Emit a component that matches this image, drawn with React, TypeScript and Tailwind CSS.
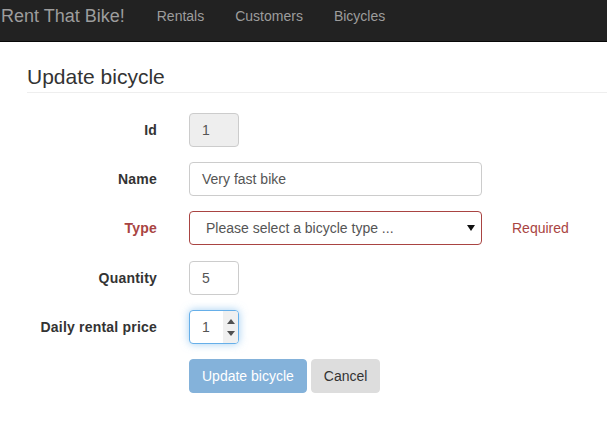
import React from "react";

const font = { fontFamily: '"Liberation Sans", Arial, Helvetica, sans-serif' };

function Row({
  label,
  error,
  children,
  className = "",
}: {
  label?: string;
  error?: boolean;
  children: React.ReactNode;
  className?: string;
}) {
  return (
    <div className={`flex items-center ${className}`}>
      <label
        className={`w-[130px] shrink-0 text-right text-[14px] font-bold leading-5 tracking-[0.2px] ${
          error ? "text-[#a94442]" : "text-[#333]"
        }`}
      >
        {label}
      </label>
      <div className="ml-[32px] flex items-center">{children}</div>
    </div>
  );
}

export default function App() {
  return (
    <div className="min-h-screen bg-white text-[14px] text-[#333]" style={font}>
      {/* Navbar */}
      <nav className="flex h-[42px] items-start border-b border-[#080808] bg-[#222] pt-[6px]">
        <a className="pl-[1px] pr-[17px] text-[18px] leading-5 text-[#9d9d9d]">Rent That Bike!</a>
        <a className="pl-[15px] pr-[16px] text-[14px] leading-5 text-[#9d9d9d]">Rentals</a>
        <a className="pl-[15px] pr-[16px] text-[14px] leading-5 text-[#9d9d9d]">Customers</a>
        <a className="pl-[15px] pr-[16px] text-[14px] leading-5 text-[#9d9d9d]">Bicycles</a>
      </nav>

      <div className="pl-[27px]">
        <div className="mt-[23px] border-b border-[#eee] pb-[4px]">
          <h3 className="text-[21px] font-normal leading-[1.1] text-[#333]">Update bicycle</h3>
        </div>

        <form className="mt-[20px] flex flex-col gap-[15px]">
          <Row label="Id">
            <div className="flex h-[34px] w-[50px] items-center rounded border border-[#ccc] bg-[#eee] px-3 text-[#555]">
              1
            </div>
          </Row>

          <Row label="Name">
            <div className="flex h-[34px] w-[293px] items-center rounded border border-[#ccc] bg-white px-3 text-[#555]">
              Very fast bike
            </div>
          </Row>

          <Row label="Type" error className="mb-[1px]">
            <div className="flex h-[34px] w-[293px] items-center justify-between rounded border border-[#a94442] bg-white pl-4 pr-[5px] text-[#555]">
              <span>Please select a bicycle type ...</span>
              <svg width="8" height="6" viewBox="0 0 8 6" className="mr-[1px]">
                <path d="M0 0 L8 0 L4 6 Z" fill="#111" />
              </svg>
            </div>
            <span className="ml-[30px] text-[#a94442]">Required</span>
          </Row>

          <Row label="Quantity">
            <div className="flex h-[34px] w-[50px] items-center rounded border border-[#ccc] bg-white px-3 text-[#555]">
              5
            </div>
          </Row>

          <Row label="Daily rental price">
            <div className="flex h-[34px] w-[50px] items-stretch overflow-hidden rounded border border-[#66afe9] bg-white shadow-[0_0_8px_rgba(102,175,233,0.6)]">
              <span className="flex flex-1 items-center pl-3 text-[#555]">1</span>
              <div className="flex w-[15px] flex-col items-center justify-center gap-[7px] bg-[#f0f0f0]">
                <svg width="8" height="5" viewBox="0 0 8 5">
                  <path d="M0 5 L8 5 L4 0 Z" fill="#505050" />
                </svg>
                <svg width="8" height="5" viewBox="0 0 8 5">
                  <path d="M0 0 L8 0 L4 5 Z" fill="#505050" />
                </svg>
              </div>
            </div>
          </Row>

          <Row>
            <div className="flex gap-[4px]">
              <button
                type="button"
                className="h-[34px] rounded border border-[#84b2da] bg-[#84b2da] px-3 text-[14px] text-white"
              >
                Update bicycle
              </button>
              <button
                type="button"
                className="h-[34px] rounded border border-[#ddd] bg-[#ddd] px-3 text-[14px] text-[#333]"
              >
                Cancel
              </button>
            </div>
          </Row>
        </form>
      </div>
    </div>
  );
}
